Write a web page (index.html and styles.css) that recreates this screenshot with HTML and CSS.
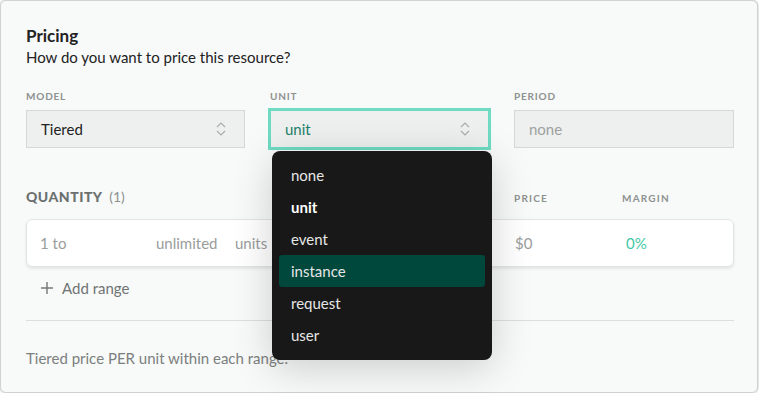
FILE: index.html
```html
<!doctype html>
<html lang="en">
  <head>
    <meta charset="UTF-8" />
    <meta name="viewport" content="width=device-width, initial-scale=1.0" />
    <title>Pricing</title>
    <link rel="stylesheet" href="styles.css">
  </head>
  <body>
    <div class="card">
      <h2 class="title">Pricing</h2>
      <p class="subtitle">How do you want to price this resource?</p>

      <div class="fields">
        <div class="field">
          <label class="label">Model</label>
          <div class="select">
            <span>Tiered</span>
            <svg class="chevrons" width="12" height="16" viewBox="0 0 12 16"><path d="M2 6l4-4 4 4M2 10l4 4 4-4" fill="none" stroke="#a9aeac" stroke-width="1.2"/></svg>
          </div>
        </div>
        <div class="field">
          <label class="label">Unit</label>
          <div class="select focused">
            <span class="value">unit</span>
            <svg class="chevrons" width="12" height="16" viewBox="0 0 12 16"><path d="M2 6l4-4 4 4M2 10l4 4 4-4" fill="none" stroke="#a9aeac" stroke-width="1.2"/></svg>
          </div>
        </div>
        <div class="field">
          <label class="label">Period</label>
          <div class="select disabled">
            <span>none</span>
          </div>
        </div>
      </div>

      <div class="quantity-head">
        <div class="col-range"><b>Quantity</b> <span class="count">(1)</span></div>
        <div class="col-price">Price</div>
        <div class="col-margin">Margin</div>
      </div>
      <div class="tier">
        <div class="col-from">1 to</div>
        <div class="col-to">unlimited</div>
        <div class="col-units">units</div>
        <div class="col-price">$0</div>
        <div class="col-margin margin">0%</div>
      </div>
      <div class="add-range">
        <svg width="14" height="14" viewBox="0 0 14 14"><path d="M7 1v12M1 7h12" stroke="#777" stroke-width="1.4"/></svg>
        Add range
      </div>

      <hr class="divider" />
      <p class="note">Tiered price PER unit within each range.</p>

      <ul class="menu">
        <li>none</li>
        <li class="selected">unit</li>
        <li>event</li>
        <li class="active">instance</li>
        <li>request</li>
        <li>user</li>
      </ul>
    </div>
  </body>
</html>
```

FILE: styles.css
```css
body {
  margin: 0;
  font-family: "Lato", "Open Sans", sans-serif;
  color: #222;
}

.card {
  position: relative;
  box-sizing: border-box;
  width: 758px;
  height: 393px;
  padding: 24px 23px 0 25px;
  background: #f8f9f9;
  border: 1px solid #cfd2d1;
  border-radius: 6px;
  box-shadow: 0 0 0 1px #e4e6e5;
}

.title {
  margin: 0;
  font-size: 17px;
  font-weight: 700;
  line-height: 22px;
}

.subtitle {
  margin: 0;
  font-size: 15px;
  line-height: 20px;
}

.fields {
  display: grid;
  grid-template-columns: 219px 219px 220px;
  column-gap: 25px;
  margin-top: 22px;
}

.label {
  display: block;
  margin-bottom: 7px;
  font-size: 10px;
  font-weight: 700;
  line-height: 14px;
  letter-spacing: 0.8px;
  text-transform: uppercase;
  color: #8d9190;
}

.select {
  box-sizing: border-box;
  display: flex;
  align-items: center;
  justify-content: space-between;
  height: 38px;
  padding: 0 17px 0 14px;
  background: #eef0ef;
  border: 1px solid #d3d9d7;
  font-size: 15px;
}

.select.focused {
  border-color: #f4f6f5;
  outline: 3px solid #6edbc2;
  outline-offset: -1px;
}

.select.focused .value {
  color: #1b7f6b;
}

.select.disabled {
  color: #9da1a0;
}

.quantity-head {
  display: flex;
  align-items: center;
  margin-top: 39px;
  line-height: 20px;
  font-size: 10px;
  font-weight: 700;
  letter-spacing: 1.2px;
  text-transform: uppercase;
  color: #8d9190;
}

.quantity-head .col-range {
  width: 488px;
}

.quantity-head b {
  font-size: 14px;
  letter-spacing: 0.5px;
  color: #6b706f;
}

.quantity-head .count {
  margin-left: 3px;
  font-size: 14px;
  font-weight: 400;
  letter-spacing: 0;
  color: #8d9190;
}

.col-price {
  width: 108px;
}

.tier {
  display: flex;
  align-items: center;
  box-sizing: border-box;
  height: 48px;
  margin-top: 11px;
  padding-left: 13px;
  background: #fff;
  border: 1px solid #e2e4e3;
  border-radius: 6px;
  box-shadow: 0 2px 3px rgba(0, 0, 0, 0.08);
  font-size: 15px;
  color: #999d9c;
}

.col-from {
  width: 116px;
}

.col-to {
  width: 79px;
}

.col-units {
  width: 280px;
}

.tier .col-price {
  width: 111px;
}

.margin {
  color: #3fc9a7;
}

.add-range {
  display: flex;
  align-items: center;
  gap: 8px;
  margin-top: 11px;
  padding-left: 14px;
  font-size: 15px;
  line-height: 20px;
  color: #6f7473;
}

.divider {
  margin: 22px 0 0;
  border: 0;
  border-top: 1px solid #dcdfde;
}

.note {
  margin: 27px 0 0;
  font-size: 15px;
  line-height: 20px;
  color: #7b7f7e;
}

.menu {
  position: absolute;
  left: 271px;
  top: 150px;
  box-sizing: border-box;
  width: 220px;
  height: 209px;
  margin: 0;
  padding: 8px 7px;
  list-style: none;
  background: #181818;
  border-radius: 8px;
  box-shadow: 0 8px 40px rgba(0, 0, 0, 0.18);
}

.menu li {
  height: 32px;
  padding-left: 12px;
  line-height: 32px;
  font-size: 15px;
  color: #e6e6e6;
  border-radius: 3px;
}

.menu li.selected {
  font-weight: 700;
  color: #fff;
}

.menu li.active {
  background: #00473c;
}
```
